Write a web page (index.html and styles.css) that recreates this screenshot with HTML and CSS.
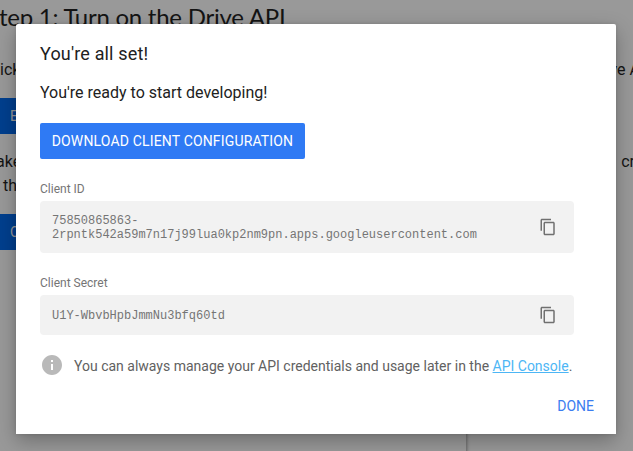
FILE: index.html
```html
<!DOCTYPE html>
<html lang="en">
<head>
<meta charset="utf-8">
<title>Drive API Quickstart</title>
<link rel="stylesheet" href="styles.css">
</head>
<body>
<main class="page">
  <article class="article">
    <h2 class="step">tep 1: Turn on the Drive API</h2>
    <p class="row first"><span>ick</span><span>ve A</span></p>
    <div class="action">E</div>
    <p class="row second"><span>ake</span><span>cr</span></p>
    <p class="row third"><span>th</span></p>
    <div class="action lower">C</div>
  </article>
  <div class="panel-strip"><div class="code-panel"></div></div>
</main>
<section class="dialog" role="dialog">
  <h1 class="title"><span>You're all set!</span></h1>
  <p class="lead"><span>You're ready to start developing!</span></p>
  <button class="download"><span>DOWNLOAD CLIENT CONFIGURATION</span></button>
  <div class="label">Client ID</div>
  <div class="field tall">
    <code>75850865863-<br>2rpntk542a59m7n17j99lua0kp2nm9pn.apps.googleusercontent.com</code>
    <svg class="copy" viewBox="0 0 24 24"><path d="M16 1H4c-1.1 0-2 .9-2 2v14h2V3h12V1zm3 4H8c-1.1 0-2 .9-2 2v14c0 1.1.9 2 2 2h11c1.1 0 2-.9 2-2V7c0-1.1-.9-2-2-2zm0 16H8V7h11v14z"/></svg>
  </div>
  <div class="label secret">Client Secret</div>
  <div class="field">
    <code>U1Y-WbvbHpbJmmNu3bfq60td</code>
    <svg class="copy" viewBox="0 0 24 24"><path d="M16 1H4c-1.1 0-2 .9-2 2v14h2V3h12V1zm3 4H8c-1.1 0-2 .9-2 2v14c0 1.1.9 2 2 2h11c1.1 0 2-.9 2-2V7c0-1.1-.9-2-2-2zm0 16H8V7h11v14z"/></svg>
  </div>
  <div class="note">
    <svg class="info" viewBox="0 0 24 24"><path d="M12 2C6.48 2 2 6.48 2 12s4.48 10 10 10 10-4.48 10-10S17.52 2 12 2zm1 15h-2v-6h2v6zm0-8h-2V7h2v2z"/></svg>
    <span class="note-text">You can always manage your API credentials and usage later in the <a class="link">API Console</a>.</span>
  </div>
  <div class="footer"><button class="done">DONE</button></div>
</section>
</body>
</html>
```

FILE: styles.css
```css
* { box-sizing: border-box; }
body {
  margin: 0;
  width: 633px;
  height: 451px;
  overflow: hidden;
  position: relative;
  background: #999;
  font-family: Roboto, sans-serif;
  color: #141414;
}
h1, h2, p { margin: 0; font-weight: 400; }
button { border: 0; padding: 0; font-family: inherit; background: none; }
.page { height: 451px; display: flex; flex-direction: column; }
.article { flex: none; height: 434px; }
.step {
  height: 36px;
  margin-left: -1px;
  font: 400 24px/34px Lato, Roboto, sans-serif;
  letter-spacing: -.25px;
  white-space: nowrap;
}
.row {
  display: flex;
  justify-content: space-between;
  height: 24px;
  font-size: 16px;
  line-height: 24px;
}
.first { margin-top: 22px; margin-right: -7px; }
.action {
  width: 120px;
  height: 36px;
  margin-top: 16px;
  padding-left: 10px;
  background: #003f8e;
  color: #999;
  font-size: 14px;
  line-height: 36px;
}
.second { margin-top: 16px; margin-left: -4px; margin-right: -2px; }
.third { margin-left: 3px; }
.lower { margin-top: 16px; }
.panel-strip { height: 17px; overflow: hidden; }
.code-panel {
  width: 466px;
  height: 60px;
  margin-top: -20px;
  box-shadow: 1px 0 3px rgba(0, 0, 0, .35);
}
.dialog {
  position: absolute;
  left: 16px;
  top: 24px;
  width: 600px;
  height: 410px;
  padding: 18px 24px 0;
  border-radius: 2px 2px 0 0;
  background: #fff;
  color: #212121;
  box-shadow: 0 7px 20px rgba(0, 0, 0, .28), 0 0 4px rgba(0, 0, 0, .12);
}
.title { font-size: 18px; line-height: 24px; letter-spacing: .16px; }
.lead { margin-top: 15px; font-size: 16px; line-height: 24px; }
.download {
  display: flex;
  align-items: center;
  justify-content: center;
  width: 265px;
  height: 36px;
  margin-top: 18px;
  border-radius: 2px;
  background: #2f7af4;
  color: #fff;
  font-size: 14px;
  letter-spacing: .16px;
  white-space: nowrap;
}
.label {
  margin-top: 22px;
  height: 16px;
  font-size: 12px;
  line-height: 16px;
  color: #757575;
}
.secret { margin-top: 22px; }
.field {
  display: flex;
  align-items: center;
  justify-content: space-between;
  width: 534px;
  height: 40px;
  margin-top: 4px;
  padding: 0 17px 0 12px;
  border-radius: 4px;
  background: #f2f2f2;
}
.field.tall { height: 52px; }
code {
  padding-top: 2px;
  font: 12px/14px "Liberation Mono", monospace;
  color: #757575;
}
.copy { width: 18px; height: 18px; fill: #707070; }
.note {
  display: flex;
  align-items: center;
  gap: 10px;
  height: 24px;
  margin-top: 18px;
  font-size: 14px;
  color: #616161;
  white-space: nowrap;
}
.note-text { padding-top: 2px; }
.info { width: 24px; height: 24px; fill: #b9b9b9; }
.link { color: #4db6f5; text-decoration: underline; }
.footer { display: flex; justify-content: flex-end; margin-top: 17px; }
.done {
  margin-right: -2px;
  height: 24px;
  color: #3b7cf0;
  font-size: 14px;
  line-height: 24px;
}
```
